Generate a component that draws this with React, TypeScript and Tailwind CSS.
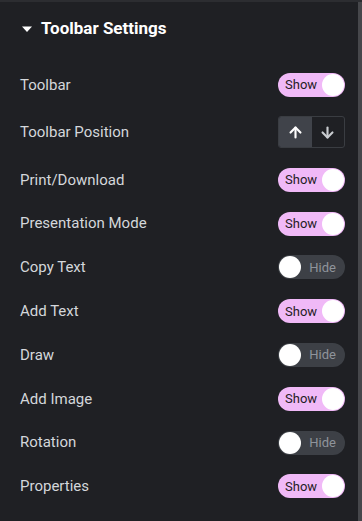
import { ArrowDown, ArrowUp } from "lucide-react";

type Row = { label: string; kind: "show" | "hide" | "position" };

const rows: Row[] = [
  { label: "Toolbar", kind: "show" },
  { label: "Toolbar Position", kind: "position" },
  { label: "Print/Download", kind: "show" },
  { label: "Presentation Mode", kind: "show" },
  { label: "Copy Text", kind: "hide" },
  { label: "Add Text", kind: "show" },
  { label: "Draw", kind: "hide" },
  { label: "Add Image", kind: "show" },
  { label: "Rotation", kind: "hide" },
  { label: "Properties", kind: "show" },
];

const Toggle = ({ on }: { on: boolean }) => {
  if (on) {
    return (
      <div className="flex items-center w-[67px] h-[24px] rounded-full bg-[#f0b9f7] pl-[7px] pr-[1px]">
        <span className="text-[13px] text-[#1f2024] flex-1">Show</span>
        <span className="w-[22px] h-[22px] rounded-full bg-white" />
      </div>
    );
  }
  return (
    <div className="flex items-center w-[67px] h-[24px] rounded-full bg-[#3d4046] pl-[1px] pr-[9px]">
      <span className="w-[22px] h-[22px] rounded-full bg-white" />
      <span className="text-[13px] text-[#8f949b] flex-1 text-right">Hide</span>
    </div>
  );
};

const PositionSwitch = () => (
  <div className="flex w-[67px] h-[32px] rounded-[3px] border border-[#3a3d42] overflow-hidden">
    <div className="flex-1 flex items-center justify-center bg-[#40434a] text-white">
      <ArrowUp size={17} strokeWidth={3} />
    </div>
    <div className="flex-1 flex items-center justify-center text-[#c9ccd0]">
      <ArrowDown size={17} strokeWidth={3} />
    </div>
  </div>
);

export default function App() {
  return (
    <div
      className="w-[362px] h-[521px] bg-[#1f2024] border-t-2 border-[#2c2d31] flex overflow-hidden"
      style={{ fontFamily: "Roboto, 'Liberation Sans', sans-serif" }}
    >
      <div className="flex-1 pl-[20px] pr-[13px] pt-[16px]">
        <div className="flex items-center gap-[8px] h-[22px]">
          <svg width="12" height="12" viewBox="0 0 12 12" className="ml-[1px]">
            <path d="M1 3.5h10L6 9z" fill="#fff" />
          </svg>
          <h2 className="text-[17px] font-bold text-white">Toolbar Settings</h2>
        </div>
        <div className="mt-[24px] flex flex-col">
          {rows.map((r, i) => (
            <div
              key={r.label}
              className={
                "flex items-center justify-between " +
                (r.kind === "position" ? "h-[52px]" : i === 0 ? "h-[42px]" : "h-[43.8px]")
              }
            >
              <span className="text-[15px] text-[#d4d7db]">{r.label}</span>
              {r.kind === "position" ? <PositionSwitch /> : <Toggle on={r.kind === "show"} />}
            </div>
          ))}
        </div>
      </div>
      <div className="w-[4px] bg-[#46474b]" />
    </div>
  );
}
